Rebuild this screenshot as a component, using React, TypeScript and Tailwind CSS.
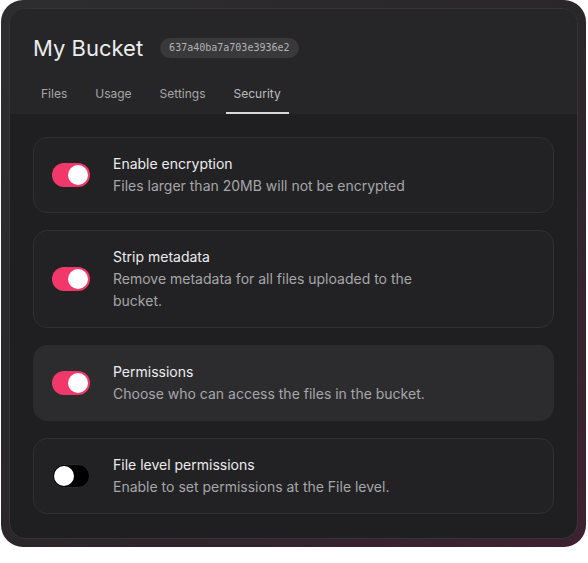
import React from "react";

type Item = { title: string; desc: string; on: boolean; active?: boolean };

const items: Item[] = [
  { title: "Enable encryption", desc: "Files larger than 20MB will not be encrypted", on: true },
  { title: "Strip metadata", desc: "Remove metadata for all files uploaded to the bucket.", on: true },
  { title: "Permissions", desc: "Choose who can access the files in the bucket.", on: true, active: true },
  { title: "File level permissions", desc: "Enable to set permissions at the File level.", on: false },
];

function Toggle({ on }: { on: boolean }) {
  return on ? (
    <div className="flex h-[24px] w-[38px] shrink-0 items-center justify-end rounded-full bg-[#f2386b] p-[2px]">
      <div className="h-[20px] w-[20px] rounded-full bg-white" />
    </div>
  ) : (
    <div className="flex h-[24px] w-[38px] shrink-0 items-center justify-start rounded-full border border-[#2a2a2a] bg-black p-[1px]">
      <div className="h-[20px] w-[20px] rounded-full bg-white" />
    </div>
  );
}

export default function App() {
  return (
    <div className="h-[563px] w-[588px] bg-white" style={{ fontFamily: "Inter, 'Noto Sans', sans-serif" }}>
      <div className="ml-[1px] h-[547px] w-[585px] rounded-[22px] bg-gradient-to-br from-[#2d2d30] via-[#2a2629] to-[#3e2131] p-[8px]">
        <div className="flex h-full flex-col overflow-hidden rounded-[16px] border border-[#353538] bg-[#1f1f21]">
          <div className="bg-[#262628] px-[23px] pt-[25px]">
            <div className="flex items-center gap-[17px]">
              <h1 className="text-[22px] leading-[28px] font-normal text-[#ececec]">My Bucket</h1>
              <span
                className="mt-[-1px] rounded-full bg-[#39393b] px-[9px] py-[3px] text-[10px] leading-[14px] text-[#b3b3b3]"
                style={{ fontFamily: "'DejaVu Sans Mono', monospace" }}
              >
                637a40ba7a703e3936e2
              </span>
            </div>
            <div className="mt-[22px] flex gap-[12px]">
              {["Files", "Usage", "Settings", "Security"].map((t) => (
                <div
                  key={t}
                  className={
                    t === "Security"
                      ? "border-b-2 border-[#d9d9d9] px-[8px] pb-[8px] text-[12px] leading-[20px] text-[#bdbdbd]"
                      : "border-b-2 border-transparent px-[8px] pb-[8px] text-[12px] leading-[20px] text-[#a6a6a6]"
                  }
                >
                  {t}
                </div>
              ))}
            </div>
          </div>
          <div className="flex flex-col gap-[17px] px-[23px] pt-[23px]">
            {items.map((it) => (
              <div
                key={it.title}
                className={
                  it.active
                    ? "flex items-center gap-[23px] rounded-[14px] border border-[#2c2c2f] bg-[#2c2c2f] px-[18px] py-[15px]"
                    : "flex items-center gap-[23px] rounded-[14px] border border-[#303033] bg-[#222224] px-[18px] py-[15px]"
                }
              >
                <Toggle on={it.on} />
                <div className="max-w-[330px]">
                  <div className="text-[14px] leading-[22px] font-normal text-[#ececee]">{it.title}</div>
                  <div className="text-[14px] leading-[22px] text-[#a6a6a9]">{it.desc}</div>
                </div>
              </div>
            ))}
          </div>
        </div>
      </div>
    </div>
  );
}
